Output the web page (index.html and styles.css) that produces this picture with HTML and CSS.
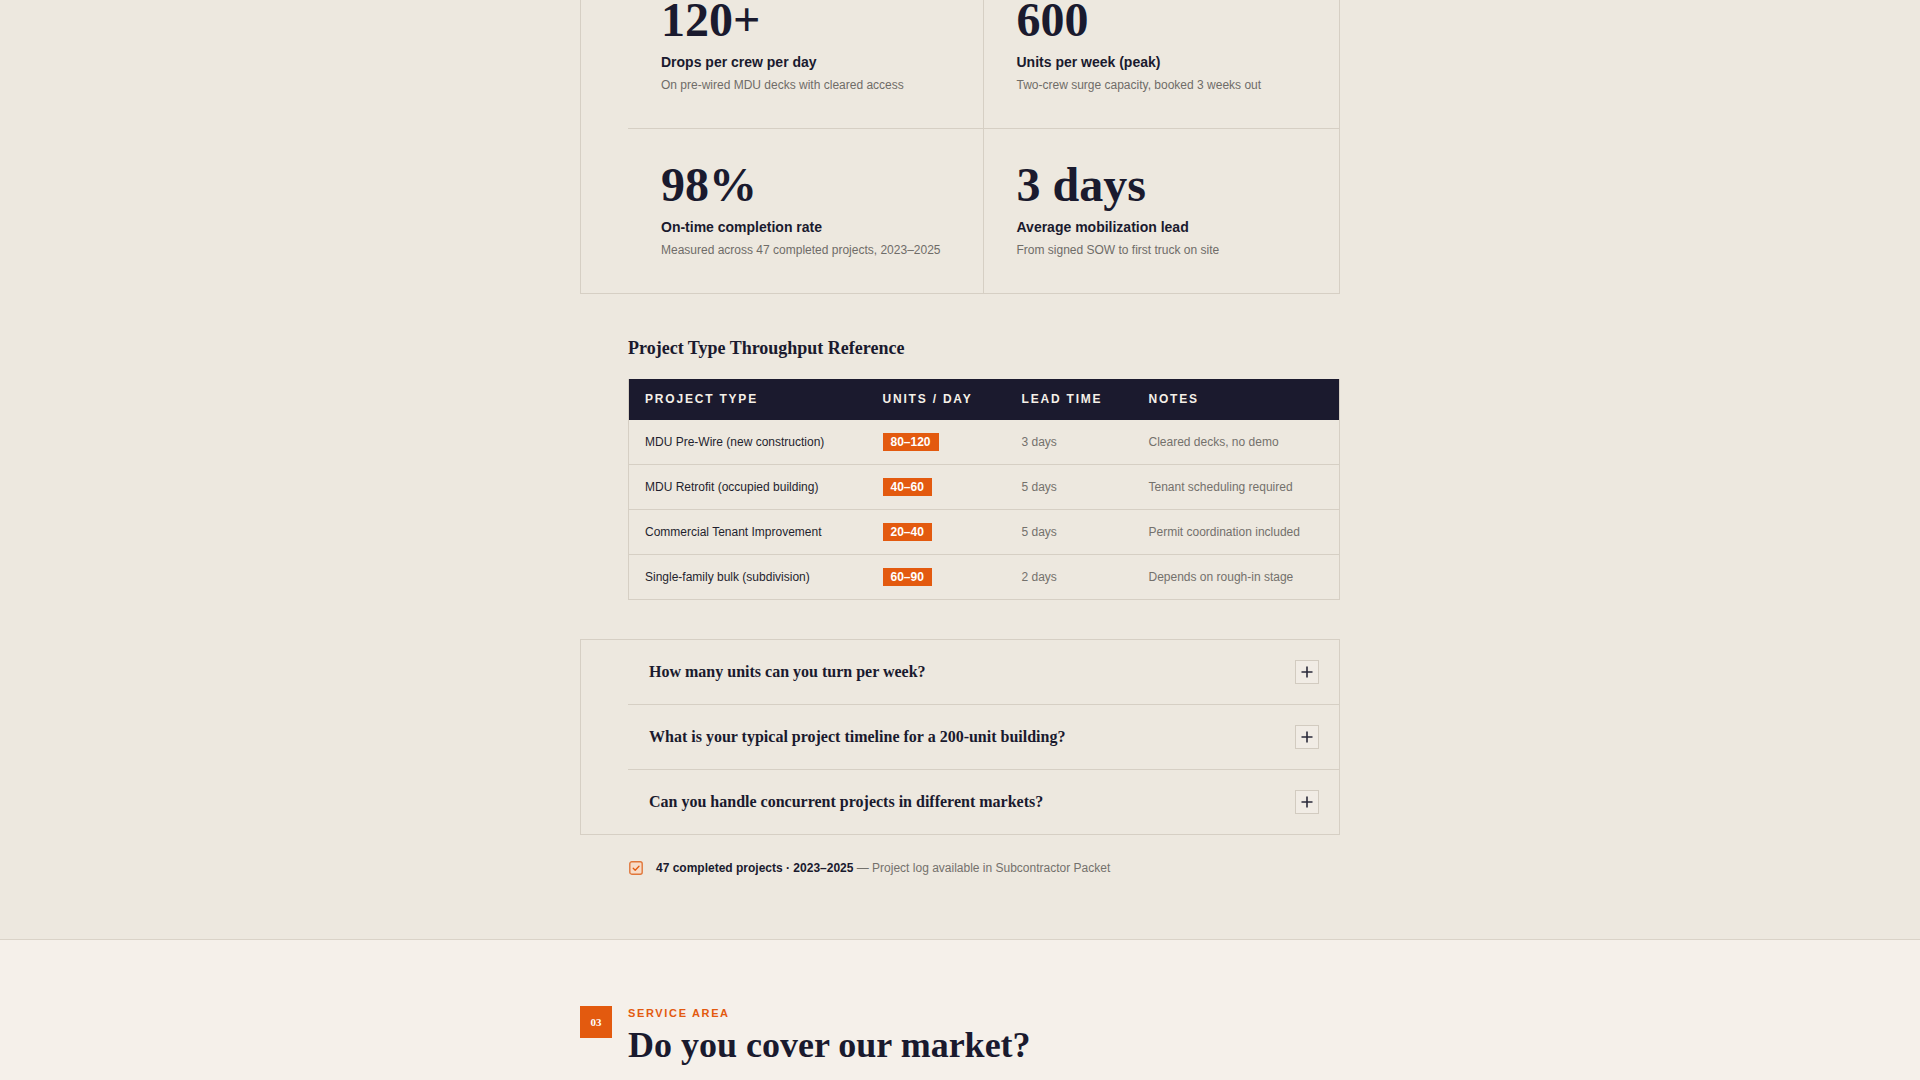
FILE: index.html
```html
<!DOCTYPE html>
<html lang="en">
<head>
<meta charset="utf-8">
<title>Capacity &amp; Throughput</title>
<link rel="stylesheet" href="styles.css">
</head>
<body>
<section class="band band-capacity">
  <div class="page">
    <div class="stats">
      <div class="stat">
        <div class="stat-num">120+</div>
        <div class="stat-label">Drops per crew per day</div>
        <div class="stat-note">On pre-wired MDU decks with cleared access</div>
      </div>
      <div class="stat">
        <div class="stat-num">600</div>
        <div class="stat-label">Units per week (peak)</div>
        <div class="stat-note">Two-crew surge capacity, booked 3 weeks out</div>
      </div>
      <div class="stat">
        <div class="stat-num">98%</div>
        <div class="stat-label">On-time completion rate</div>
        <div class="stat-note">Measured across 47 completed projects, 2023–2025</div>
      </div>
      <div class="stat">
        <div class="stat-num">3 days</div>
        <div class="stat-label">Average mobilization lead</div>
        <div class="stat-note">From signed SOW to first truck on site</div>
      </div>
    </div>

    <div class="indent">
      <h3 class="table-title">Project Type Throughput Reference</h3>
      <table class="throughput">
        <thead>
          <tr>
            <th class="c-type">Project Type</th>
            <th class="c-units">Units / Day</th>
            <th class="c-lead">Lead Time</th>
            <th class="c-notes">Notes</th>
          </tr>
        </thead>
        <tbody>
          <tr>
            <td class="t-type">MDU Pre-Wire (new construction)</td>
            <td><span class="pill">80–120</span></td>
            <td class="t-muted">3 days</td>
            <td class="t-muted">Cleared decks, no demo</td>
          </tr>
          <tr>
            <td class="t-type">MDU Retrofit (occupied building)</td>
            <td><span class="pill">40–60</span></td>
            <td class="t-muted">5 days</td>
            <td class="t-muted">Tenant scheduling required</td>
          </tr>
          <tr>
            <td class="t-type">Commercial Tenant Improvement</td>
            <td><span class="pill">20–40</span></td>
            <td class="t-muted">5 days</td>
            <td class="t-muted">Permit coordination included</td>
          </tr>
          <tr>
            <td class="t-type">Single-family bulk (subdivision)</td>
            <td><span class="pill">60–90</span></td>
            <td class="t-muted">2 days</td>
            <td class="t-muted">Depends on rough-in stage</td>
          </tr>
        </tbody>
      </table>
    </div>

    <div class="faq">
      <div class="faq-item">
        <span class="faq-q">How many units can you turn per week?</span>
        <span class="faq-toggle"><svg width="12" height="12" viewBox="0 0 12 12"><path d="M6 0.5v11M0.5 6h11" stroke="#2a2a3a" stroke-width="1.6" fill="none"/></svg></span>
      </div>
      <div class="faq-item">
        <span class="faq-q">What is your typical project timeline for a 200-unit building?</span>
        <span class="faq-toggle"><svg width="12" height="12" viewBox="0 0 12 12"><path d="M6 0.5v11M0.5 6h11" stroke="#2a2a3a" stroke-width="1.6" fill="none"/></svg></span>
      </div>
      <div class="faq-item">
        <span class="faq-q">Can you handle concurrent projects in different markets?</span>
        <span class="faq-toggle"><svg width="12" height="12" viewBox="0 0 12 12"><path d="M6 0.5v11M0.5 6h11" stroke="#2a2a3a" stroke-width="1.6" fill="none"/></svg></span>
      </div>
    </div>

    <div class="indent proof">
      <svg class="proof-icon" width="14" height="14" viewBox="0 0 14 14">
        <rect x="0.8" y="0.8" width="12.4" height="12.4" rx="2" fill="#f7dcc8" stroke="#e0763a" stroke-width="1.4"/>
        <path d="M4.2 7.2l2 2 3.8-4" fill="none" stroke="#e35a0f" stroke-width="1.3" stroke-linecap="round" stroke-linejoin="round"/>
      </svg>
      <span class="proof-text"><strong>47 completed projects · 2023–2025</strong> — Project log available in Subcontractor Packet</span>
    </div>
  </div>
</section>

<section class="band band-service">
  <div class="page">
    <header class="section-head">
      <span class="section-num">03</span>
      <div class="section-titles">
        <div class="eyebrow">Service Area</div>
        <h2 class="section-title">Do you cover our market?</h2>
      </div>
    </header>
  </div>
</section>
</body>
</html>
```

FILE: styles.css
```css
* {
  box-sizing: border-box;
}

html,
body {
  margin: 0;
  padding: 0;
}

body {
  background: #f5f0ea;
  color: #1a1a2e;
  font-family: "Liberation Sans", Arial, sans-serif;
}

.page {
  width: 760px;
  margin: 0 auto;
}

.band-capacity {
  background: #ede8df;
  padding-bottom: 62px;
}

.band-service {
  background: #f5f0ea;
  border-top: 1px solid #dad3c8;
  padding-top: 66px;
  padding-bottom: 120px;
}

.indent {
  padding-left: 48px;
}

/* stat grid (page is scrolled partway into it) */
.stats {
  margin-top: -37px;
  border: 1px solid #d6cfc4;
  padding-left: 47px;
  display: grid;
  grid-template-columns: 1fr 1fr;
}

.stat {
  padding: 32px 32px 34px 33px;
}

.stat:nth-child(odd) {
  border-right: 1px solid #d6cfc4;
}

.stat:nth-child(-n+2) {
  border-bottom: 1px solid #d6cfc4;
}

.stat-num {
  font-family: "Liberation Serif", "Times New Roman", serif;
  font-weight: 700;
  font-size: 48px;
  line-height: 48px;
  color: #1a1a2e;
}

.stat-label {
  margin-top: 8px;
  font-size: 14px;
  line-height: 20px;
  font-weight: 700;
  color: #1a1a2e;
}

.stat-note {
  margin-top: 4px;
  font-size: 12px;
  line-height: 18px;
  color: #6f6c68;
}

/* throughput table */
.table-title {
  margin: 42px 0 19px;
  font-family: "Liberation Serif", "Times New Roman", serif;
  font-weight: 700;
  font-size: 18px;
  line-height: 24px;
  color: #1a1a2e;
}

.throughput {
  width: 100%;
  table-layout: fixed;
  border-collapse: collapse;
  border: 1px solid #d6cfc4;
  border-top: 0;
}

.throughput th {
  background: #1b1a2e;
  color: #f5f0e8;
  text-align: left;
  font-size: 12px;
  line-height: 12px;
  font-weight: 700;
  letter-spacing: 0.15em;
  text-transform: uppercase;
  padding: 14px 16px 15px;
}

.c-type { width: 238px; }
.c-units { width: 139px; }
.c-lead { width: 127px; }
.c-notes { width: auto; }

.throughput td {
  padding: 13px 16px;
  font-size: 12px;
  line-height: 18px;
  border-bottom: 1px solid #d6cfc4;
  vertical-align: middle;
}

.t-type {
  color: #1f1f2e;
}

.t-muted {
  color: #74716c;
}

.pill {
  display: inline-block;
  background: #e35a0f;
  color: #fff;
  font-weight: 700;
  font-size: 12px;
  line-height: 18px;
  padding: 0 8px;
}

/* FAQ accordion */
.faq {
  margin-top: 39px;
  border: 1px solid #d6cfc4;
  padding-left: 47px;
}

.faq-item {
  display: flex;
  align-items: center;
  justify-content: space-between;
  padding: 20px 20px 20px 21px;
}

.faq-item + .faq-item {
  border-top: 1px solid #d6cfc4;
}

.faq-q {
  font-family: "Liberation Serif", "Times New Roman", serif;
  font-weight: 700;
  font-size: 16px;
  line-height: 24px;
  color: #1a1a2e;
}

.faq-toggle {
  width: 24px;
  height: 24px;
  border: 1px solid #d2cbc0;
  background: #f1ece5;
  display: flex;
  align-items: center;
  justify-content: center;
}

.faq-toggle svg {
  display: block;
}

/* proof line */
.proof {
  margin-top: 24px;
  display: flex;
  align-items: center;
  gap: 13px;
  padding-left: 49px;
}

.proof-icon {
  display: block;
  flex: none;
}

.proof-text {
  font-size: 12px;
  line-height: 18px;
  color: #74716c;
}

.proof-text strong {
  color: #1a1a2e;
  font-weight: 700;
}

/* section header */
.section-head {
  display: grid;
  grid-template-columns: 32px 1fr;
  column-gap: 16px;
  align-items: start;
}

.section-num {
  width: 32px;
  height: 32px;
  background: #e35a0f;
  color: #fff;
  font-family: "Liberation Serif", "Times New Roman", serif;
  font-weight: 700;
  font-size: 11px;
  display: flex;
  align-items: center;
  justify-content: center;
}

.eyebrow {
  font-size: 11px;
  line-height: 14px;
  font-weight: 700;
  letter-spacing: 0.15em;
  text-transform: uppercase;
  color: #e35a0f;
  margin-bottom: 6px;
}

.section-title {
  margin: 0;
  font-family: "Liberation Serif", "Times New Roman", serif;
  font-weight: 700;
  font-size: 36px;
  line-height: 1.1;
  color: #1a1a2e;
}
```
